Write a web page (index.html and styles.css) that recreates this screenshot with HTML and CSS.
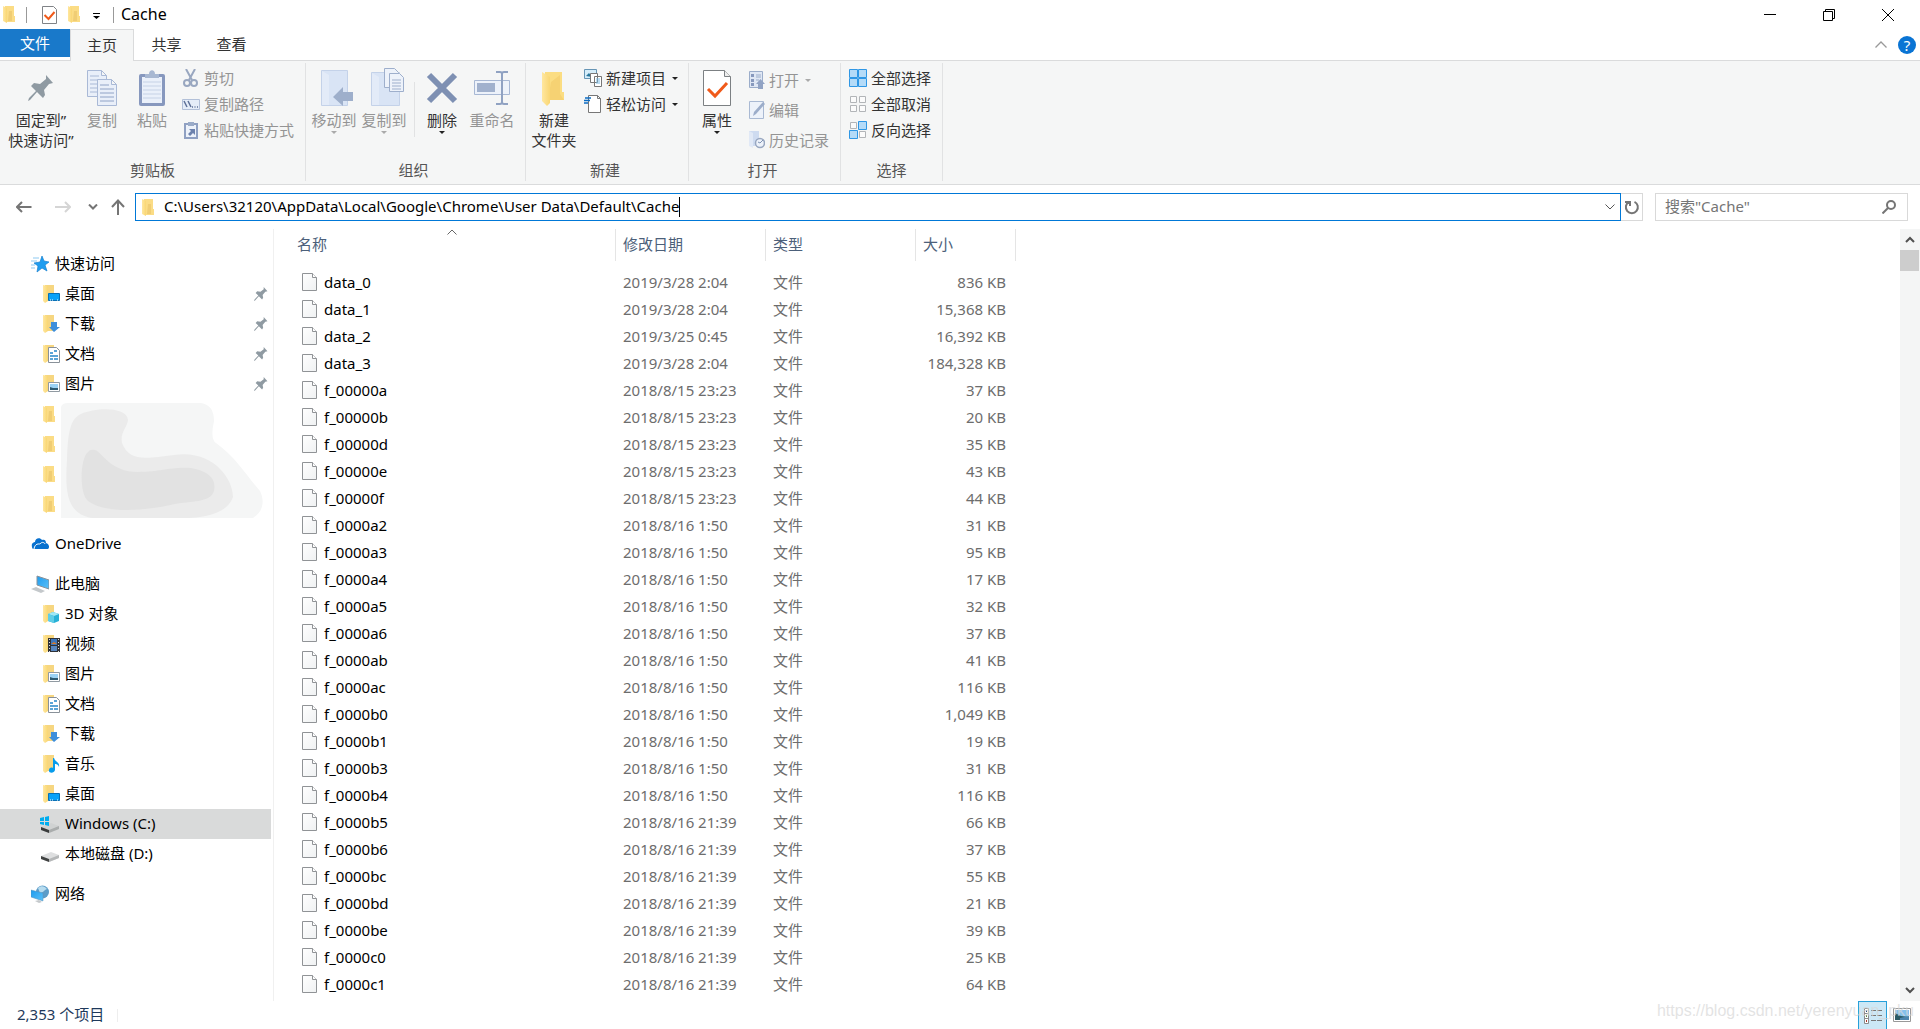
FILE: index.html
```html
<!DOCTYPE html>
<html lang="zh-CN">
<head>
<meta charset="utf-8">
<title>Cache</title>
<link rel="stylesheet" href="styles.css">
</head>
<body>
<svg class="defs" aria-hidden="true">
  <defs>
    <linearGradient id="fold" x1="0" x2="1"><stop offset="0" stop-color="#ffe79f"/><stop offset="1" stop-color="#f9d673"/></linearGradient>
    <linearGradient id="paper" x1="0" y1="0" x2="1" y2="1"><stop offset="0" stop-color="#fff"/><stop offset="1" stop-color="#eff1f2"/></linearGradient>
    <linearGradient id="sky" x1="0" y1="0" x2="1" y2="1"><stop offset="0" stop-color="#1e9bee"/><stop offset="1" stop-color="#5cc1f8"/></linearGradient>
  </defs>
  <symbol id="folder" viewBox="0 0 12 17"><path d="M2 0h9v10h1v6H2z" fill="#fbdc85"/><path d="M6 5h3v10H5z" fill="#f0cd74"/><path d="M0 0l4 2v15L0 15z" fill="url(#fold)"/></symbol>
  <symbol id="folder-back" viewBox="0 0 20 18"><path d="M5 0h9v16H5z" fill="#f6d681"/><path d="M3 0l5 1v15l-3 2-2-2z" fill="url(#fold)"/></symbol>
  <symbol id="pin" viewBox="0 0 26 26"><path d="M18 0l7 8-4 1-5 6 1 5-2 3-6-6-7 8-2 1 1-3 7-7-5-5 3-3 6 1 6-5z" fill="#8f9aa2"/></symbol>
  <symbol id="file" viewBox="0 0 15 18"><path d="M.5.5h10l4 4v13H.5z" fill="url(#paper)" stroke="#909396"/><path d="M10.500 .5v4h4" fill="#fff" stroke="#909396"/></symbol>
  <symbol id="check" viewBox="0 0 15 18"><path d="M.5.5h11l3 3v14H.5z" fill="#fff" stroke="#808387"/><path d="M2.500 9l4 4 6-7" fill="none" stroke="#f05a1a" stroke-width="2"/></symbol>
</svg>

<header class="titlebar">
  <div class="quick">
    <svg class="mini-folder"><use href="#folder"/></svg><i class="bar"></i>
    <button class="q-check" aria-label="属性"><svg width="15" height="18"><use href="#check"/></svg></button>
    <button class="q-folder" aria-label="新建文件夹"><svg class="mini-folder"><use href="#folder"/></svg></button>
    <button class="q-more" aria-label="自定义"><svg width="7" height="6"><path d="M0 0h7v1H0zM0 3h7L3.500 6z"/></svg></button><i class="bar"></i>
  </div>
  <h1>Cache</h1>
  <div class="winctl">
    <button aria-label="最小化"><svg width="12" height="12"><path d="M0 5.500h12" stroke="#000"/></svg></button>
    <button aria-label="还原"><svg width="12" height="12" fill="none" stroke="#000"><path d="M.5 2.500h9v9h-9zM2.500 2V.5h9v9H10"/></svg></button>
    <button aria-label="关闭"><svg width="12" height="12" stroke="#000"><path d="M0 0l12 12M12 0L0 12"/></svg></button>
  </div>
</header>

<nav class="tabs">
  <button class="tab file">文件</button><button class="tab active">主页</button><button class="tab">共享</button><button class="tab">查看</button>
  <div class="tabs-end">
    <button aria-label="折叠功能区"><svg width="12" height="7"><path d="M.5 6.500L6 1l5.500 5.500" fill="none" stroke="#999" stroke-width="1.300"/></svg></button>
    <button class="help" aria-label="帮助">?</button>
  </div>
</nav>

<section class="ribbon">
  <div class="group g-clip">
    <div class="tools">
      <button class="big wide"><svg width="36" height="36"><use href="#pin" x="5" y="5" width="26" height="26"/></svg><span>固定到”<br>快速访问”</span></button>
      <button class="big" disabled><svg width="36" height="36" viewBox="0 0 36 36" fill="#e9eff9" stroke="#a9b9d6"><path d="M3.500.5h14l5 5v21h-19zM17.500.5v5h5"/><path d="M6 6h9M6 10h14M6 14h8M6 18h8M6 22h8"/><path d="M13.500 9.500h14l5 5v21h-19zM27.500 9.500v5h5"/><path d="M16 15h9M16 19h14M16 23h14M16 27h14M16 31h14" stroke="#90a3c6"/></svg>复制</button>
      <button class="big" disabled><svg width="36" height="36" viewBox="0 0 36 36"><rect x="5" y="4" width="26" height="32" rx="2" fill="#8798be"/><path d="M8 7h20v26H8z" fill="#eaf0fa"/><path d="M9 12h18M9 16h18M9 20h18M9 24h18M9 28h18" stroke="#c6d2e6"/><path d="M11 4h4c0-5 6-5 6 0h4v4H11z" fill="#a8b8d2"/></svg>粘贴</button>
      <div class="smalls">
        <button disabled><svg width="18" height="18" viewBox="0 0 18 18" fill="none" stroke="#99a7c0" stroke-width="2"><path d="M4 0l6 11M13 0L7 11"/><circle cx="5" cy="14" r="3"/><circle cx="12" cy="14" r="3"/></svg>剪切</button>
        <button disabled><svg width="18" height="18" viewBox="0 0 18 18"><path d="M.5 4.500h17v10H.5z" fill="#e5edf8" stroke="#b2c0d8"/><path d="M2 6l3 6M6 6l3 6M10 12h1M12.500 12h1M15 12h1" stroke="#5f7298" stroke-width="1.500"/></svg>复制路径</button>
        <button disabled><svg width="18" height="18" viewBox="0 0 18 18"><path d="M3 3h12v14H3z" fill="#edf2fa" stroke="#8fa0c2" stroke-width="2"/><path d="M6 1h6v4H6z" fill="#9aabc8"/><path d="M7 8h6v6l-2-2-3 3-2-2 3-3z" fill="#6d82ad"/></svg>粘贴快捷方式</button>
      </div>
    </div>
    <div class="caption">剪贴板</div>
  </div>
  <div class="group g-org">
    <div class="tools">
      <button class="big" disabled><svg width="36" height="36" viewBox="0 0 36 36"><path d="M5.500.5h26v35h-26z" fill="#d9e4f5" stroke="#c4d2e9"/><path d="M6 1l7 4v30H6z" fill="#e3ebf8"/><path d="M17 27l10-10v5h10v9H27v5z" fill="#9eafcb"/></svg>移动到<i class="arrow"></i></button>
      <button class="big" disabled><svg width="36" height="36" viewBox="0 0 36 36"><path d="M5.500 2.500h28v33h-28z" fill="#d9e4f5" stroke="#c4d2e9"/><path d="M6 3l7 4v28H6z" fill="#e3ebf8"/><g transform="translate(5 -1)" fill="#edf2fa" stroke="#9eafcc"><path d="M13.500-.5h10l4 4v15h-14z"/><path d="M18.500 4.500h10l4 4v14h-14z"/><path d="M21 11h9M21 14h9M21 17h9M21 20h9"/></g></svg>复制到<i class="arrow"></i></button>
      <i class="divider"></i>
      <button class="big"><svg width="36" height="36" viewBox="0 0 36 36"><path d="M5 5l26 26M31 5L5 31" stroke="#7e90b3" stroke-width="6"/></svg>删除<i class="arrow"></i></button>
      <button class="big" disabled><svg width="36" height="36" viewBox="0 0 36 36"><path d="M.5 10.500h35v14H.5z" fill="#edf2fa" stroke="#a8b8d4"/><path d="M3 13h18v9H3z" fill="#a1b1cd"/><path d="M22 2h4q2 0 2 2v28q0 2-2 2h-4m12-32h-4q-2 0-2 2m0 28q0 2 2 2h4" fill="none" stroke="#90a2c2" stroke-width="2"/></svg>重命名</button>
    </div>
    <div class="caption">组织</div>
  </div>
  <div class="group g-new">
    <div class="tools">
      <button class="big wider"><svg width="36" height="36" viewBox="0 0 36 36"><path d="M9 2h17v20h2v8H9z" fill="#fbdd82"/><path d="M15 12l9-7v19l4 6H12z" fill="#f6d273"/><path d="M6 2l8 5v26l-3 3-5-5z" fill="url(#fold)"/></svg><span>新建<br>文件夹</span></button>
      <div class="smalls">
        <button><svg width="18" height="18" viewBox="0 0 18 18"><path d="M.5.5h12v9H.5z" fill="#d5edfa" stroke="#6695b5"/><path d="M2 7l3-3 3 4z" fill="#27759a"/><path d="M6.500 4.500h7v9h-7zM10.500 7.500h7v10h-7z" fill="#fff" stroke="#777"/><path d="M12 10h4M12 12h4M12 14h4" stroke="#78bce7"/></svg>新建项目<i class="arrow"></i></button>
        <button><svg width="18" height="18" viewBox="0 0 18 18"><path d="M4.500.5h9l3 3v14h-12z" fill="#fff" stroke="#777"/><path d="M13.500.5v3h3" fill="none" stroke="#777"/><path d="M1 3h6M0 5.500h6M0 8h4" stroke="#0b6cc4" stroke-width="1.500"/></svg>轻松访问<i class="arrow"></i></button>
      </div>
    </div>
    <div class="caption">新建</div>
  </div>
  <div class="group g-open">
    <div class="tools">
      <button class="big wider"><svg width="36" height="36" viewBox="0 0 36 36"><path d="M4.500.5h21l6 6v29h-27z" fill="#fff" stroke="#7c8083"/><path d="M25.500.5v6h6" fill="#eee" stroke="#7c8083"/><path d="M9 19l7 7 12-13" fill="none" stroke="#f05a1a" stroke-width="3"/></svg>属性<i class="arrow"></i></button>
      <div class="smalls loose">
        <button disabled><svg width="16" height="18" viewBox="0 0 16 18"><path d="M.5.5h13v16H.5z" fill="#dfe7f4" stroke="#9badca"/><path d="M2 3h3v3H2zM2 8h3v3H2zM2 12h3v3H2z" fill="#8799bd"/><path d="M7 4h5M7 6h5M7 9h3" stroke="#9badca"/><path d="M7 13l4.500-5 4.500 5h-2v5H9v-5z" fill="#91a3c4"/></svg>打开<i class="arrow"></i></button>
        <button disabled><svg width="16" height="18" viewBox="0 0 16 18"><path d="M.5.5h14v17H.5z" fill="#edf2fa" stroke="#a9b9d3"/><path d="M4 15l1-4 9-10 2 2-9 10z" fill="#9cadca"/></svg>编辑</button>
        <button disabled><svg width="16" height="18" viewBox="0 0 16 18"><path d="M0 0h10v15H0z" fill="#cedbf0"/><path d="M0 0l4 2v15l-4-2z" fill="#e1e9f6"/><circle cx="11" cy="12" r="4.500" fill="#edf2fa" stroke="#98a7c0" stroke-width="1.500"/><path d="M11 12l3-3M11 12l-2-1" stroke="#8093b3"/></svg>历史记录</button>
      </div>
    </div>
    <div class="caption">打开</div>
  </div>
  <div class="group g-select">
    <div class="tools">
      <div class="smalls">
        <button><svg width="18" height="18" viewBox="0 0 18 18" fill="#b4dbf8" stroke="#2f97e5"><path d="M.5.5h8v8h-8zM9.500.5h8v8h-8zM.5 9.500h8v8h-8zM9.500 9.500h8v8h-8z"/></svg>全部选择</button>
        <button><svg width="18" height="18" viewBox="0 0 18 18" fill="#fbfbfb" stroke="#b2b5b8"><path d="M1.500 1.500h6v6h-6zM10.500 1.500h6v6h-6zM1.500 10.500h6v6h-6zM10.500 10.500h6v6h-6z"/></svg>全部取消</button>
        <button><svg width="18" height="18" viewBox="0 0 18 18"><path d="M1.500 1.500h6v6h-6zM10.500 10.500h6v6h-6z" fill="#fbfbfb" stroke="#b2b5b8"/><path d="M9.500.5h8v8h-8zM.5 9.500h8v8h-8z" fill="#b4dbf8" stroke="#2f97e5"/></svg>反向选择</button>
      </div>
    </div>
    <div class="caption">选择</div>
  </div>
</section>

<div class="address-row">
  <button class="n-back" aria-label="后退"><svg width="16" height="12" viewBox="0 0 16 12" fill="none" stroke="#757575" stroke-width="2"><path d="M1 6h14.500M6 1L1 6l5 5"/></svg></button>
  <button class="n-fwd" aria-label="前进"><svg width="16" height="12" viewBox="0 0 16 12" fill="none" stroke="#d5d5d5" stroke-width="2"><path d="M0 6h15M10 1l5 5-5 5"/></svg></button>
  <button class="n-hist" aria-label="最近位置"><svg width="10" height="6" viewBox="0 0 10 6" fill="none" stroke="#757575" stroke-width="2"><path d="M1 .5l4 4 4-4"/></svg></button>
  <button class="n-up" aria-label="上移"><svg width="14" height="16" viewBox="0 0 14 16" fill="none" stroke="#757575" stroke-width="2"><path d="M7 16V1.500M1 8l6-6.500L13 8"/></svg></button>
  <div class="address">
    <svg class="mini-folder"><use href="#folder"/></svg>
    <input class="path" aria-label="地址" value="C:\Users\32120\AppData\Local\Google\Chrome\User Data\Default\Cache"><i class="caret"></i>
    <button class="drop" aria-label="以前的位置"><svg width="10" height="6"><path d="M.5.5L5 5 9.500.5" fill="none" stroke="#555"/></svg></button>
  </div>
  <button class="refresh" aria-label="刷新"><svg width="16" height="16" viewBox="0 0 16 16" fill="none" stroke="#757575" stroke-width="2"><path d="M10.500 2.800a6 6 0 1 1-5.500.1M2 2v1h4v4"/></svg></button>
  <div class="search">
    <input type="search" aria-label="搜索" placeholder='搜索"Cache"'>
    <svg width="14" height="14" viewBox="0 0 14 14" fill="none" stroke="#757575" stroke-width="2"><circle cx="9" cy="5" r="4"/><path d="M6 8l-5.500 5.500"/></svg>
  </div>
</div>

<main class="content">
  <nav class="side">
    <ul>
      <li class="root"><svg viewBox="0 0 18 16"><path d="M11 0l2 5 5 1-4 3 2 6-5-3-5 4 1-6-4-3 6-1z" fill="#1e9df0" stroke="#1680d0" stroke-width=".7"/><path d="M2 2h6M0 5h6M0 9h4M0 12h4" stroke="#8dc9f1"/></svg><a href="#">快速访问</a></li>
      <li><svg viewBox="0 0 20 18"><use href="#folder-back" width="20" height="18"/><path d="M8.500 8.500h11v7h-11z" fill="#0aa2f8" stroke="#0871b6"/><path d="M10 15h1m1 0h1m4 0h1" stroke="#fff"/></svg><a href="#">桌面</a><svg class="tack"><use href="#pin"/></svg></li>
      <li><svg viewBox="0 0 20 18"><use href="#folder-back" width="20" height="18"/><path d="M11 7h6v5h3l-6 5-5-5h2z" fill="#3d8edb"/></svg><a href="#">下载</a><svg class="tack"><use href="#pin"/></svg></li>
      <li><svg viewBox="0 0 20 18"><use href="#folder-back" width="20" height="18"/><path d="M8.500 2.500h8l3 3v12h-11z" fill="#fff" stroke="#899199"/><path d="M10 8h3m1-2h3M10 11h8M10 14h3m1 0h4" stroke="#2486c9" stroke-width="1.500"/></svg><a href="#">文档</a><svg class="tack"><use href="#pin"/></svg></li>
      <li><svg viewBox="0 0 20 18"><use href="#folder-back" width="20" height="18"/><path d="M8.500 7.500h11v9h-11z" fill="#fff" stroke="#919aa2"/><path d="M10 9h8v6h-8z" fill="#9bd2f5"/><path d="M10 12l3 1 5 0v2h-8z" fill="#2e5b73"/></svg><a href="#">图片</a><svg class="tack"><use href="#pin"/></svg></li>
      <li class="plain"><svg viewBox="0 0 12 17"><use href="#folder" width="12" height="17"/></svg></li>
      <li class="plain"><svg viewBox="0 0 12 17"><use href="#folder" width="12" height="17"/></svg></li>
      <li class="plain"><svg viewBox="0 0 12 17"><use href="#folder" width="12" height="17"/></svg></li>
      <li class="plain"><svg viewBox="0 0 12 17"><use href="#folder" width="12" height="17"/></svg></li>
    </ul>
    <svg class="smudge" viewBox="0 0 202 115"><path d="M0 4Q1 0 7 0H140Q153 2 153 18Q149 36 155 40C175 54 188 76 199 88C204 98 202 109 192 115H0z" fill="#f5f6f6"/><path d="M20 11C36 4 66 4 67 17C66 25 59 29 61 40C68 58 82 56 113 52C151 46 172 75 172 94C166 111 144 114 128 115H31C5 111 4 87 6 57C7 29 9 16 20 11z" fill="#ebebeb"/><path d="M34 47C41 49 49 69 77 69C101 69 106 64 130 65C152 69 155 79 153 88C149 100 129 98 114 101C83 108 45 111 27 98C18 91 19 55 27 49Q29 46 34 47z" fill="#e2e2e2"/></svg>
    <ul>
      <li class="root"><svg viewBox="0 0 18 14"><path d="M1 10C0 6 3 5 4 5c0-4 5-5 7-2 3-1 4 1 4 3 3 1 4 4 2 6H5C2 12 1 12 1 10z" fill="#0871cf"/><path d="M3 12c1-6 5-5 6-5 2-3 5-1 5 0" fill="none" stroke="#fff"/></svg><a href="#">OneDrive</a></li>
    </ul>
    <ul>
      <li class="root"><svg viewBox="0 0 18 18"><path d="M6 1l12 4v9L6 10z" fill="url(#sky)" stroke="#88929b"/><path d="M0 14l5-2 9 4-4 2z" fill="#c4c8cb"/></svg><a href="#">此电脑</a></li>
      <li><svg viewBox="0 0 20 18"><use href="#folder-back" width="20" height="18"/><path d="M8 9l5-2 6 2v7l-5 2-6-2z" fill="#28b1d7"/><path d="M8 9l5-2 6 2-5 2z" fill="#a3e9f5"/><path d="M8 9l6 2v7l-6-2z" fill="#60cee7"/></svg><a href="#">3D 对象</a></li>
      <li><svg viewBox="0 0 20 18"><use href="#folder-back" width="20" height="18"/><path d="M8 3h12v14H8z" fill="#303236"/><path d="M11 4h6v6h-6z" fill="#3c77bd"/><path d="M11 11h6v5h-6z" fill="#5887c0"/><path d="M11 9l3-2 3 2z" fill="#db7a25"/><path d="M9.500 4v13M18.500 4v13" stroke="#ddd" stroke-dasharray="1 2"/></svg><a href="#">视频</a></li>
      <li><svg viewBox="0 0 20 18"><use href="#folder-back" width="20" height="18"/><path d="M8.500 7.500h11v9h-11z" fill="#fff" stroke="#919aa2"/><path d="M10 9h8v6h-8z" fill="#9bd2f5"/><path d="M10 12l3 1 5 0v2h-8z" fill="#2e5b73"/></svg><a href="#">图片</a></li>
      <li><svg viewBox="0 0 20 18"><use href="#folder-back" width="20" height="18"/><path d="M8.500 2.500h8l3 3v12h-11z" fill="#fff" stroke="#899199"/><path d="M10 8h3m1-2h3M10 11h8M10 14h3m1 0h4" stroke="#2486c9" stroke-width="1.500"/></svg><a href="#">文档</a></li>
      <li><svg viewBox="0 0 20 18"><use href="#folder-back" width="20" height="18"/><path d="M11 7h6v5h3l-6 5-5-5h2z" fill="#3d8edb"/></svg><a href="#">下载</a></li>
      <li><svg viewBox="0 0 20 18"><use href="#folder-back" width="20" height="18"/><path d="M14 3c1 4 6 4 5 9-1-3-3-3-4-3v6c-1 4-7 3-6 0 0-2 2-3 4-2V3z" fill="#079ceb"/></svg><a href="#">音乐</a></li>
      <li><svg viewBox="0 0 20 18"><use href="#folder-back" width="20" height="18"/><path d="M8.500 8.500h11v7h-11z" fill="#0aa2f8" stroke="#0871b6"/><path d="M10 15h1m1 0h1m4 0h1" stroke="#fff"/></svg><a href="#">桌面</a></li>
      <li class="selected"><svg viewBox="0 0 20 18"><path d="M1 12l10-4 8 3v3l-10 4-8-3z" fill="#d0d2d2"/><path d="M1 12l8 3v3l-8-3z" fill="#393b3b"/><path d="M9 15l10-4v3L9 18z" fill="#aaadad"/><path d="M0 3l4-1v4H0zM5 2l4-1v5H5zM0 7h4v3l-4-1zM5 7h4v4l-4-1z" fill="#00adef"/></svg><a href="#">Windows (C:)</a></li>
      <li><svg viewBox="0 0 20 18"><path d="M1 11l10-4 8 3v3L9 17l-8-3z" fill="#dedfe0"/><path d="M1 11l8 3v3l-8-3z" fill="#404242"/><path d="M9 14l10-4v3L9 17z" fill="#b5b7b8"/></svg><a href="#">本地磁盘 (D:)</a></li>
    </ul>
    <ul>
      <li class="root"><svg viewBox="0 0 18 18"><circle cx="11.500" cy="7" r="6.500" fill="#5c9cc8"/><path d="M7 3c3-3 7-2 9 1-3 1-4 4-7 4z" fill="#b7dcef"/><path d="M0 5l12 3v8L0 12z" fill="url(#sky)" stroke="#5b91b8" stroke-width=".5"/><path d="M4 16l4-1 3 2-3 1z" fill="#c4c8cb"/></svg><a href="#">网络</a></li>
    </ul>
  </nav>

  <section class="files">
    <table>
      <colgroup><col class="c-name"><col class="c-date"><col class="c-type"><col class="c-size"></colgroup>
      <thead><tr><th>名称<svg class="sort" width="10" height="6"><path d="M.5 5.500L5 1l4.500 4.500" fill="none" stroke="#666"/></svg></th><th>修改日期</th><th>类型</th><th>大小</th></tr></thead>
      <tbody>
        <tr><td><svg><use href="#file"/></svg>data_0</td><td>2019/3/28 2:04</td><td>文件</td><td>836 KB</td></tr>
        <tr><td><svg><use href="#file"/></svg>data_1</td><td>2019/3/28 2:04</td><td>文件</td><td>15,368 KB</td></tr>
        <tr><td><svg><use href="#file"/></svg>data_2</td><td>2019/3/25 0:45</td><td>文件</td><td>16,392 KB</td></tr>
        <tr><td><svg><use href="#file"/></svg>data_3</td><td>2019/3/28 2:04</td><td>文件</td><td>184,328 KB</td></tr>
        <tr><td><svg><use href="#file"/></svg>f_00000a</td><td>2018/8/15 23:23</td><td>文件</td><td>37 KB</td></tr>
        <tr><td><svg><use href="#file"/></svg>f_00000b</td><td>2018/8/15 23:23</td><td>文件</td><td>20 KB</td></tr>
        <tr><td><svg><use href="#file"/></svg>f_00000d</td><td>2018/8/15 23:23</td><td>文件</td><td>35 KB</td></tr>
        <tr><td><svg><use href="#file"/></svg>f_00000e</td><td>2018/8/15 23:23</td><td>文件</td><td>43 KB</td></tr>
        <tr><td><svg><use href="#file"/></svg>f_00000f</td><td>2018/8/15 23:23</td><td>文件</td><td>44 KB</td></tr>
        <tr><td><svg><use href="#file"/></svg>f_0000a2</td><td>2018/8/16 1:50</td><td>文件</td><td>31 KB</td></tr>
        <tr><td><svg><use href="#file"/></svg>f_0000a3</td><td>2018/8/16 1:50</td><td>文件</td><td>95 KB</td></tr>
        <tr><td><svg><use href="#file"/></svg>f_0000a4</td><td>2018/8/16 1:50</td><td>文件</td><td>17 KB</td></tr>
        <tr><td><svg><use href="#file"/></svg>f_0000a5</td><td>2018/8/16 1:50</td><td>文件</td><td>32 KB</td></tr>
        <tr><td><svg><use href="#file"/></svg>f_0000a6</td><td>2018/8/16 1:50</td><td>文件</td><td>37 KB</td></tr>
        <tr><td><svg><use href="#file"/></svg>f_0000ab</td><td>2018/8/16 1:50</td><td>文件</td><td>41 KB</td></tr>
        <tr><td><svg><use href="#file"/></svg>f_0000ac</td><td>2018/8/16 1:50</td><td>文件</td><td>116 KB</td></tr>
        <tr><td><svg><use href="#file"/></svg>f_0000b0</td><td>2018/8/16 1:50</td><td>文件</td><td>1,049 KB</td></tr>
        <tr><td><svg><use href="#file"/></svg>f_0000b1</td><td>2018/8/16 1:50</td><td>文件</td><td>19 KB</td></tr>
        <tr><td><svg><use href="#file"/></svg>f_0000b3</td><td>2018/8/16 1:50</td><td>文件</td><td>31 KB</td></tr>
        <tr><td><svg><use href="#file"/></svg>f_0000b4</td><td>2018/8/16 1:50</td><td>文件</td><td>116 KB</td></tr>
        <tr><td><svg><use href="#file"/></svg>f_0000b5</td><td>2018/8/16 21:39</td><td>文件</td><td>66 KB</td></tr>
        <tr><td><svg><use href="#file"/></svg>f_0000b6</td><td>2018/8/16 21:39</td><td>文件</td><td>37 KB</td></tr>
        <tr><td><svg><use href="#file"/></svg>f_0000bc</td><td>2018/8/16 21:39</td><td>文件</td><td>55 KB</td></tr>
        <tr><td><svg><use href="#file"/></svg>f_0000bd</td><td>2018/8/16 21:39</td><td>文件</td><td>21 KB</td></tr>
        <tr><td><svg><use href="#file"/></svg>f_0000be</td><td>2018/8/16 21:39</td><td>文件</td><td>39 KB</td></tr>
        <tr><td><svg><use href="#file"/></svg>f_0000c0</td><td>2018/8/16 21:39</td><td>文件</td><td>25 KB</td></tr>
        <tr><td><svg><use href="#file"/></svg>f_0000c1</td><td>2018/8/16 21:39</td><td>文件</td><td>64 KB</td></tr>
      </tbody>
    </table>
  </section>

  <div class="scroll">
    <button aria-label="向上滚动"><svg width="10" height="7"><path d="M1 6l4-4 4 4" fill="none" stroke="#505050" stroke-width="2"/></svg></button>
    <div class="thumb"></div>
    <button class="down" aria-label="向下滚动"><svg width="10" height="7"><path d="M1 1l4 4 4-4" fill="none" stroke="#505050" stroke-width="2"/></svg></button>
  </div>
</main>

<footer class="status">
  <span class="count">2,353 个项目</span><i class="bar"></i>
  <div class="views">
    <button class="on" aria-label="详细信息"><svg width="18" height="16" viewBox="0 0 18 16"><path d="M.5.500h4v15h-4zM.5 5.500h4M.5 10.500h4" fill="#fff" stroke="#8b8b8b"/><path d="M2 3h1" stroke="#247" stroke-width="2"/><path d="M2 8h1" stroke="#584" stroke-width="2"/><path d="M2 13h1" stroke="#a32" stroke-width="2"/><path d="M7 2.500h5m1 0h5M7 7.500h5m1 0h5M7 12.500h5m1 0h5" stroke="#777"/></svg></button>
    <button aria-label="大缩略图"><svg width="18" height="14" viewBox="0 0 18 14"><path d="M.5.5h17v13H.5z" fill="#fff" stroke="#999"/><path d="M2 2h14v10H2z" fill="#83c1ed"/><path d="M2 5l6 3 8 1v3H2z" fill="#2b5b66"/><path d="M7 10l9-2v4H7z" fill="#4d86ae"/></svg></button>
  </div>
  <span class="watermark">https://blog.csdn.net/yerenyuan_pku</span>
</footer>
</body>
</html>
```
FILE: styles.css
```css
* { box-sizing: border-box; }

body {
  margin: 0;
  height: 100vh;
  display: flex;
  flex-direction: column;
  overflow: hidden;
  background: #fff;
  color: #000;
  font: 15px/20px "Noto Sans", "Noto Sans CJK SC", sans-serif;
}

button, input {
  font: inherit;
  color: inherit;
  background: none;
  border: 0;
  padding: 0;
  margin: 0;
  outline: 0;
}

svg { display: block; flex: none; }
ul { list-style: none; margin: 0; padding: 0; }
a { color: inherit; text-decoration: none; }
.defs { position: absolute; width: 0; height: 0; }
.mini-folder { width: 12px; height: 17px; }

/* Title bar */
.titlebar { display: flex; align-items: center; height: 29px; flex: none; padding: 0 3px; }
.quick { display: flex; align-items: center; }
.bar { width: 1px; height: 16px; background: #999; }
.quick .bar:nth-of-type(1) { margin-left: 11px; }
.q-check { margin-left: 15px; }
.q-folder { margin-left: 11px; }
.q-more { margin: 2px 13px 0; }
.titlebar h1 { margin: 0 0 2px 7px; font-size: 16px; font-weight: 400; }
.winctl { display: flex; height: 27px; margin-left: auto; }
.winctl button { width: 59px; display: grid; place-items: center; }

/* Ribbon tabs */
.tabs { display: flex; height: 32px; flex: none; border-bottom: 1px solid #dadbdc; color: #333; }
.tab { width: 65px; padding-bottom: 2px; }
.tab.file { width: 70px; height: 28px; background: #1979ca; color: #fff; padding: 0; }
.tab.active { width: 64px; height: 32px; background: #f5f6f6; border: 1px solid #dadbdc; border-bottom: 0; }
.tabs-end { display: flex; align-items: center; gap: 11px; margin-left: auto; padding-right: 4px; }
.help { width: 18px; height: 18px; border-radius: 50%; background: #0a74d4; color: #fff; line-height: 18px; text-align: center; }

/* Ribbon */
.ribbon { display: flex; height: 124px; flex: none; padding: 2px 0 3px; background: #f5f6f6; border-bottom: 1px solid #dadbdc; color: #333; }
.group { display: flex; flex-direction: column; border-right: 1px solid #e1e2e3; }
.tools { display: flex; height: 97px; }
.caption { text-align: center; color: #555; }
.g-clip { width: 306px; }
.g-clip .tools { padding-left: 5px; }
.g-org { width: 220px; }
.g-org .tools { padding-left: 3px; }
.g-org .caption { padding-right: 4px; }
.g-new { width: 163px; }
.g-new .caption { padding-right: 4px; }
.g-open { width: 152px; }
.g-open .caption { padding-right: 4px; }
.g-select { width: 102px; }
.g-select .tools { padding-left: 8px; }
.big { display: flex; flex-direction: column; align-items: center; justify-content: flex-start; width: 50px; padding-top: 7px; white-space: nowrap; }
.big svg { margin-bottom: 4px; overflow: visible; }
.big.wide { width: 72px; }
.big.wider { width: 56px; }
.big .arrow { margin-top: 1px; }
button:disabled { color: #949494; }
.arrow { width: 0; height: 0; border: 3px solid transparent; border-top-color: #222; border-bottom: 0; }
button:disabled .arrow { border-top-color: #aaa; }
.divider { width: 1px; height: 55px; margin: 19px 2px 0 5px; background: #e1e2e3; }
.smalls { padding-top: 2px; }
.g-clip .smalls { padding-left: 5px; }
.g-new .smalls { padding-left: 2px; }
.g-open .smalls { padding-left: 4px; }
.smalls button { display: flex; align-items: center; gap: 4px; height: 26px; white-space: nowrap; }
.smalls.loose button { height: 30px; }
.smalls .arrow { margin-left: 2px; }

/* Address row */
.address-row { display: flex; align-items: center; height: 44px; flex: none; padding: 0 12px 0 16px; }
.n-fwd { margin-left: 23px; }
.n-hist { margin-left: 17px; }
.n-up { margin: 0 10px 0 13px; }
.address { flex: 1; display: flex; align-items: center; height: 28px; padding-left: 6px; border: 1px solid #0078d7; }
.path { field-sizing: content; margin-left: 10px; padding-bottom: 2px; }
.caret { width: 1px; height: 20px; background: #000; }
.drop { width: 20px; margin-left: auto; display: grid; place-items: center; }
.refresh { display: grid; place-items: center; width: 22px; height: 28px; border: 1px solid #d9d9d9; border-left: 0; }
.search { display: flex; align-items: center; width: 253px; height: 28px; margin-left: 12px; padding: 0 11px 0 9px; border: 1px solid #d9d9d9; }
.search input { flex: 1; min-width: 0; padding-bottom: 2px; }
.search input::placeholder { color: #757575; opacity: 1; }

/* Content */
.content { flex: 1; min-height: 0; display: flex; overflow: hidden; }
.side { position: relative; width: 274px; flex: none; padding-top: 20px; border-right: 1px solid #f0f0f0; }
.side ul { margin-bottom: 10px; }
.side li { display: flex; align-items: center; gap: 5px; width: 271px; height: 30px; padding: 0 3px 0 40px; }
.side li > svg { width: 20px; height: 18px; }
.side a { padding-bottom: 2px; }
.side li.root { gap: 6px; padding-left: 31px; }
.side li.root > svg { width: 18px; }
.side li.plain { padding-left: 43px; }
.side li.plain > svg { width: 12px; height: 17px; }
.side li > svg.tack { width: 14px; height: 14px; margin-left: auto; }
.side li.selected { background: #d9dada; }
.smudge { position: absolute; left: 61px; top: 174px; width: 202px; height: 115px; }

.files { flex: 1; overflow: hidden; }
table { width: 742px; table-layout: fixed; border-collapse: separate; border-spacing: 0; }
.c-name { width: 342px; }
.c-date, .c-type { width: 150px; }
.c-size { width: 100px; }
th { position: relative; height: 32px; padding: 0 0 2px 7px; border-right: 1px solid #e5e5e5; text-align: left; font-weight: 400; color: #4c607a; }
th:first-child { padding-left: 23px; }
.sort { position: absolute; left: 173px; top: 0; }
tbody::before { content: ""; display: block; height: 8px; }
td { height: 27px; padding: 0 0 2px 7px; color: #6d6d6d; white-space: nowrap; }
td:first-child { display: flex; align-items: center; gap: 7px; padding-left: 28px; color: #000; }
td:first-child svg { width: 15px; height: 18px; }
td:last-child { text-align: right; padding-right: 10px; }

.scroll { display: flex; flex-direction: column; width: 20px; background: #f4f5f5; }
.scroll button { display: grid; place-items: center; height: 21px; }
.thumb { width: 19px; height: 21px; background: #cdcdcd; }
.scroll .down { margin-top: auto; }

/* Status bar */
.status { position: relative; display: flex; align-items: center; height: 28px; flex: none; padding: 0 4px 0 17px; color: #1e395b; }
.status .count { padding-bottom: 2px; }
.status .bar { height: 13px; margin-left: 13px; background: #eee; }
.views { display: flex; margin-left: auto; }
.views button { display: grid; place-items: center; width: 29px; height: 28px; }
.views .on { background: #cce8f6; border: 1px solid #26a0da; border-bottom: 0; }
.watermark { position: absolute; right: 6px; top: 0; font: 16px/20px "Liberation Sans", Arial, sans-serif; color: rgba(215, 215, 215, .7); }
```
